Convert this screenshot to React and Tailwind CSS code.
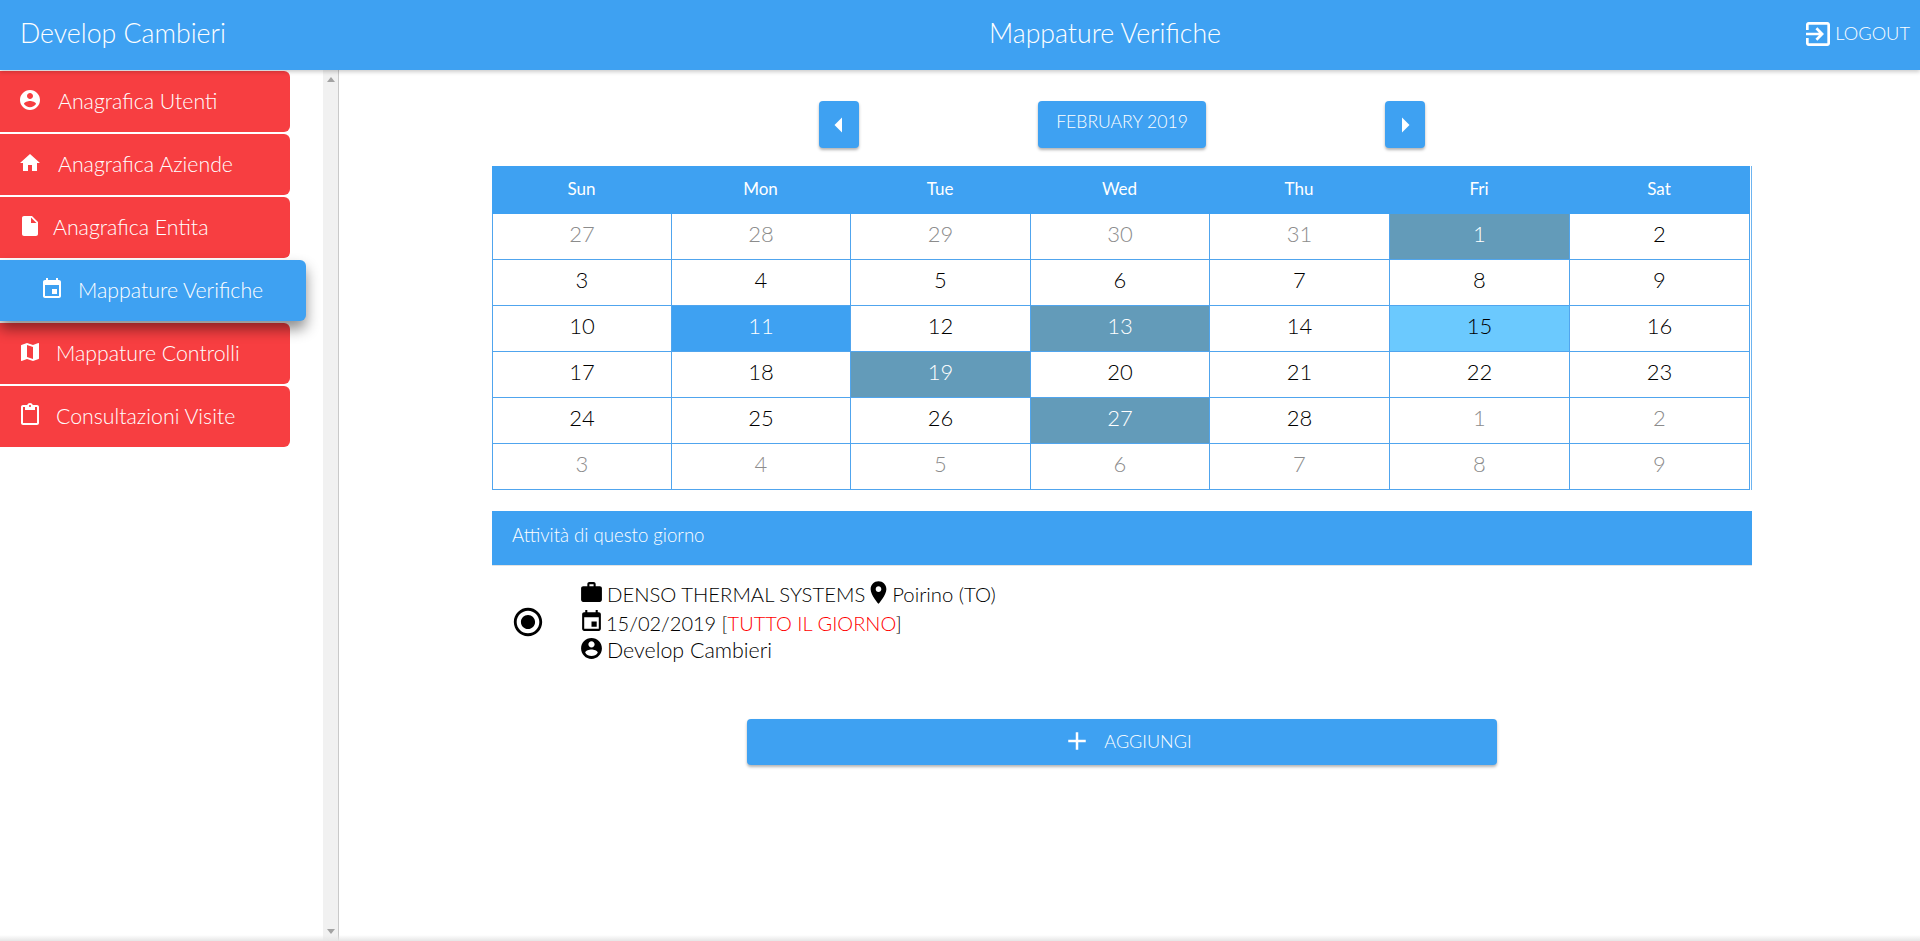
const icons = {
    user: 'M12 2C6.48 2 2 6.48 2 12s4.48 10 10 10 10-4.48 10-10S17.52 2 12 2zm0 3c1.66 0 3 1.34 3 3s-1.34 3-3 3-3-1.34-3-3 1.34-3 3-3zm0 14.2c-2.5 0-4.71-1.28-6-3.22.03-1.99 4-3.08 6-3.08 1.99 0 5.97 1.09 6 3.08-1.29 1.94-3.5 3.22-6 3.22z',
    home: 'M10 20v-6h4v6h5v-8h3L12 3 2 12h3v8z',
    file: 'M6 2c-1.1 0-1.99.9-1.99 2L4 20c0 1.1.89 2 1.99 2H18c1.1 0 2-.9 2-2V8l-6-6H6zm7 7V3.5L18.5 9H13z',
    event: 'M17 12h-5v5h5v-5zM16 1v2H8V1H6v2H5c-1.11 0-1.99.9-1.99 2L3 19c0 1.1.89 2 2 2h14c1.1 0 2-.9 2-2V5c0-1.1-.9-2-2-2h-1V1h-2zm3 18H5V8h14v11z',
    map: 'M20.5 3l-.16.03L15 5.1 9 3 3.36 4.9c-.21.07-.36.25-.36.48V20.5c0 .28.22.5.5.5l.16-.03L9 18.9l6 2.1 5.64-1.9c.21-.07.36-.25.36-.48V3.5c0-.28-.22-.5-.5-.5zM15 19l-6-2.11V5l6 2.11V19z',
    paste: 'M19 2h-4.18C14.4.84 13.3 0 12 0c-1.3 0-2.4.84-2.82 2H5c-1.1 0-2 .9-2 2v16c0 1.1.9 2 2 2h14c1.1 0 2-.9 2-2V4c0-1.1-.9-2-2-2zm-7 0c.55 0 1 .45 1 1s-.45 1-1 1-1-.45-1-1 .45-1 1-1zm7 18H5V4h2v3h10V4h2v16z',
    work: 'M20 6h-4V4c0-1.11-.89-2-2-2h-4c-1.11 0-2 .89-2 2v2H4c-1.11 0-1.99.89-1.99 2L2 19c0 1.11.89 2 2 2h16c1.11 0 2-.89 2-2V8c0-1.11-.89-2-2-2zm-6 0h-4V4h4v2z',
    place: 'M12 2C8.13 2 5 5.13 5 9c0 5.25 7 13 7 13s7-7.75 7-13c0-3.87-3.13-7-7-7zm0 9.5c-1.38 0-2.5-1.12-2.5-2.5s1.12-2.5 2.5-2.5 2.5 1.12 2.5 2.5-1.12 2.5-2.5 2.5z',
    logout: 'M10.09 15.59L11.5 17l5-5-5-5-1.41 1.41L12.67 11H3v2h9.67l-2.58 2.59zM19 3H5c-1.11 0-2 .9-2 2v4h2V5h14v14H5v-4H3v4c0 1.1.89 2 2 2h14c1.1 0 2-.9 2-2V5c0-1.1-.9-2-2-2z',
    radio: 'M12 7c-2.76 0-5 2.24-5 5s2.24 5 5 5 5-2.24 5-5-2.24-5-5-5zm0-5C6.48 2 2 6.48 2 12s4.48 10 10 10 10-4.48 10-10S17.52 2 12 2zm0 18c-4.42 0-8-3.58-8-8s3.58-8 8-8 8 3.58 8 8-3.58 8-8 8z',
    left: 'M14 7l-5 5 5 5V7z',
    right: 'M10 17l5-5-5-5v10z',
    add: 'M19 13h-6v6h-2v-6H5v-2h6V5h2v6h6v2z',
};

function Icon({ name, className }) {
    return (
        <svg viewBox="0 0 24 24" fill="currentColor" className={className}>
            <path d={icons[name]} />
        </svg>
    );
}

const menu = [
    { label: 'Anagrafica Utenti', icon: 'user', gap: 'ml-[16px]' },
    { label: 'Anagrafica Aziende', icon: 'home', gap: 'ml-[16px]' },
    { label: 'Anagrafica Entita', icon: 'file', gap: 'ml-[11px]' },
    { label: 'Mappature Verifiche', icon: 'event', gap: 'ml-[14px]', active: true },
    { label: 'Mappature Controlli', icon: 'map', gap: 'ml-[14px]' },
    { label: 'Consultazioni Visite', icon: 'paste', gap: 'ml-[14px]' },
];

const days = [
    [27, 'out'], [28, 'out'], [29, 'out'], [30, 'out'], [31, 'out'], [1, 'mark'], [2],
    [3], [4], [5], [6], [7], [8], [9],
    [10], [11, 'selected'], [12], [13, 'mark'], [14], [15, 'today'], [16],
    [17], [18], [19, 'mark'], [20], [21], [22], [23],
    [24], [25], [26], [27, 'mark'], [28], [1, 'out'], [2, 'out'],
    [3, 'out'], [4, 'out'], [5, 'out'], [6, 'out'], [7, 'out'], [8, 'out'], [9, 'out'],
];

const dayStyles = {
    out: 'text-[#8c8c8c]',
    mark: 'bg-[#639bb9] text-white',
    selected: 'bg-[#3ea1f2] text-white',
    today: 'bg-[#6bc9fe] text-black',
};

function Sidebar() {
    return (
        <aside className="flex h-full w-[339px] shrink-0 border-r border-[#c9c9c9]">
            <nav className="flex w-[323px] flex-col gap-[2px] pt-px">
                {menu.map((item) => (
                    <div
                        key={item.label}
                        className={`flex h-[61px] items-center rounded-r-md text-[21.3px] font-light text-white ${
                            item.active
                                ? 'relative z-10 w-[306px] bg-[#3ea1f2] pl-[40px] shadow-[0_8px_14px_rgba(0,0,0,0.45)]'
                                : 'w-[290px] bg-[#f73e41] pl-[18px]'
                        }`}
                    >
                        <Icon name={item.icon} className="-mt-[4px] h-6 w-6 shrink-0" />
                        <span className={item.gap}>{item.label}</span>
                    </div>
                ))}
            </nav>
            <div className="flex w-[15px] flex-col items-center justify-between bg-[#f1f1f1] py-[7px]">
                <div className="h-0 w-0 border-x-[4px] border-b-[5px] border-x-transparent border-b-[#a3a3a3]" />
                <div className="h-0 w-0 border-x-[4px] border-t-[5px] border-x-transparent border-t-[#a3a3a3]" />
            </div>
        </aside>
    );
}

function Calendar() {
    return (
        <div className="w-[1260px] border-r border-[#6db4f0]">
            <div className="grid h-[48px] w-[1258px] grid-cols-[179px_179px_180px_179px_180px_180px_180px] items-center bg-[#3ea1f2] pb-[2px] text-center text-[17px] text-white">
                {['Sun', 'Mon', 'Tue', 'Wed', 'Thu', 'Fri', 'Sat'].map((d) => (
                    <span key={d}>{d}</span>
                ))}
            </div>
            <div className="grid w-[1258px] grid-cols-[179px_179px_180px_179px_180px_180px_180px] border-l border-[#50a5ee]">
                {days.map(([n, kind], i) => (
                    <div
                        key={i}
                        className={`flex h-[46px] items-center justify-center border-r border-b border-[#50a5ee] pb-[6px] text-[22px] font-light ${
                            dayStyles[kind] ?? 'text-black'
                        }`}
                    >
                        {n}
                    </div>
                ))}
            </div>
        </div>
    );
}

export default function App() {
    return (
        <div className="relative flex h-screen flex-col overflow-hidden bg-white font-['Lato',sans-serif]">
            <header className="relative z-20 flex h-[70px] shrink-0 items-center justify-between bg-[#3ea1f2] pb-[3px] pl-[20px] pr-[10px] text-white shadow-[0_2px_4px_rgba(0,0,0,0.2)]">
                <div className="w-[680px] text-[26.7px] font-light">Develop Cambieri</div>
                <div className="text-[26.7px] font-light">Mappature Verifiche</div>
                <div className="flex w-[400px] items-center justify-end gap-[1px] text-[18.3px] font-light">
                    <Icon name="logout" className="h-[32px] w-[32px]" />
                    <span>LOGOUT</span>
                </div>
            </header>

            <div className="flex min-h-0 flex-1">
                <Sidebar />
                <main className="flex min-w-0 flex-1 flex-col pl-[153px] pt-[31px]">
                    <div className="flex w-[1260px] justify-center gap-[179px] text-white">
                        <button type="button" className="flex h-[47px] w-[40px] items-center justify-center rounded bg-[#3ea1f2] shadow-[0_2px_3px_rgba(0,0,0,0.3)]">
                            <Icon name="left" className="h-[36px] w-[36px]" />
                        </button>
                        <button type="button" className="h-[47px] w-[168px] rounded bg-[#3ea1f2] pb-[4px] text-[17.6px] font-light shadow-[0_2px_3px_rgba(0,0,0,0.3)]">
                            FEBRUARY 2019
                        </button>
                        <button type="button" className="flex h-[47px] w-[40px] items-center justify-center rounded bg-[#3ea1f2] shadow-[0_2px_3px_rgba(0,0,0,0.3)]">
                            <Icon name="right" className="h-[36px] w-[36px]" />
                        </button>
                    </div>

                    <div className="mt-[18px]">
                        <Calendar />
                    </div>

                    <div className="mt-[21px] flex h-[55px] w-[1260px] items-center border-b border-[#e3e3e3] bg-[#3ea1f2] pb-[4px] pl-[20px] text-[18.6px] font-light text-white">
                        Attività di questo giorno
                    </div>

                    <div className="flex w-[1260px] items-center pt-[14px] font-light leading-[28px] text-black">
                        <Icon name="radio" className="ml-[19px] h-[34px] w-[34px]" />
                        <div className="ml-[34px]">
                            <div className="flex h-[28px] items-center text-[20.3px]">
                                <Icon name="work" className="-mt-[3px] mr-[3px] h-[25px] w-[25px]" />
                                <span>DENSO THERMAL SYSTEMS</span>
                                <Icon name="place" className="-mt-[3px] h-[27px] w-[27px]" />
                                <span>Poirino (TO)</span>
                            </div>
                            <div className="flex h-[28px] items-center pt-[1px] text-[20px]">
                                <Icon name="event" className="-mt-[3px] mr-[2px] h-[25px] w-[25px]" />
                                <span>
                                    15/02/2019 [<span className="text-[#ff0000]">TUTTO IL GIORNO</span>]
                                </span>
                            </div>
                            <div className="flex h-[28px] items-center text-[21.4px]">
                                <Icon name="user" className="-mt-[3px] mr-[3px] h-[25px] w-[25px]" />
                                <span>Develop Cambieri</span>
                            </div>
                        </div>
                    </div>

                    <button
                        type="button"
                        className="mt-[55px] ml-[255px] flex h-[46px] w-[750px] items-center justify-center gap-[12px] rounded-sm bg-[#3ea1f2] pb-[2px] pl-[10px] text-[18px] font-light text-white shadow-[0_2px_3px_rgba(0,0,0,0.3)]"
                    >
                        <Icon name="add" className="h-[30px] w-[30px]" />
                        AGGIUNGI
                    </button>
                </main>
            </div>
            <div className="pointer-events-none absolute inset-x-0 bottom-0 z-30 h-[6px] bg-gradient-to-b from-transparent to-[#e6e6e6]" />
        </div>
    );
}
